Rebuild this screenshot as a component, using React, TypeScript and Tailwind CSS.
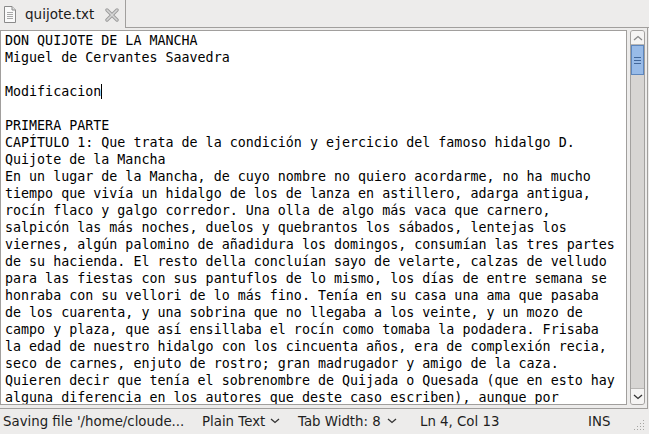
import React from 'react';

const lines = [
  'DON QUIJOTE DE LA MANCHA',
  'Miguel de Cervantes Saavedra',
  '',
  'Modificacion',
  '',
  'PRIMERA PARTE',
  'CAPÍTULO 1: Que trata de la condición y ejercicio del famoso hidalgo D.',
  'Quijote de la Mancha',
  'En un lugar de la Mancha, de cuyo nombre no quiero acordarme, no ha mucho',
  'tiempo que vivía un hidalgo de los de lanza en astillero, adarga antigua,',
  'rocín flaco y galgo corredor. Una olla de algo más vaca que carnero,',
  'salpicón las más noches, duelos y quebrantos los sábados, lentejas los',
  'viernes, algún palomino de añadidura los domingos, consumían las tres partes',
  'de su hacienda. El resto della concluían sayo de velarte, calzas de velludo',
  'para las fiestas con sus pantuflos de lo mismo, los días de entre semana se',
  'honraba con su vellori de lo más fino. Tenía en su casa una ama que pasaba',
  'de los cuarenta, y una sobrina que no llegaba a los veinte, y un mozo de',
  'campo y plaza, que así ensillaba el rocín como tomaba la podadera. Frisaba',
  'la edad de nuestro hidalgo con los cincuenta años, era de complexión recia,',
  'seco de carnes, enjuto de rostro; gran madrugador y amigo de la caza.',
  'Quieren decir que tenía el sobrenombre de Quijada o Quesada (que en esto hay',
  'alguna diferencia en los autores que deste caso escriben), aunque por',
];

function FileIcon() {
  return (
    <svg width="14" height="17" viewBox="0 0 14 17">
      <path d="M1.5 0.5 H9 L12.5 4 V16.5 H1.5 Z" fill="#fafafa" stroke="#8a8a8a" />
      <path d="M9 0.5 V4 H12.5" fill="#e0e0e0" stroke="#8a8a8a" />
      <path d="M4 6.5 H10 M4 8.5 H10 M4 10.5 H10 M4 12.5 H10" stroke="#a8a8a8" />
    </svg>
  );
}

function CloseIcon() {
  return (
    <svg width="14" height="14" viewBox="0 0 14 14">
      <path d="M2 2 L12 12 M12 2 L2 12" stroke="#9a9a9a" strokeWidth="3.4" strokeLinecap="round" />
      <path d="M2 2 L12 12 M12 2 L2 12" stroke="#d6d6d6" strokeWidth="1.6" strokeLinecap="round" />
    </svg>
  );
}

function Chevron({ up = false, color = '#333' }: { up?: boolean; color?: string }) {
  return (
    <svg width="10" height="6" viewBox="0 0 10 6" className="shrink-0">
      <path d={up ? 'M1 5 L5 1.5 L9 5' : 'M1 1 L5 4.5 L9 1'} fill="none" stroke={color} strokeWidth="1.3" />
    </svg>
  );
}

function Grip() {
  const dots: [number, number][] = [];
  for (let r = 0; r < 4; r++) {
    for (let c = 3 - r; c < 4; c++) dots.push([c * 3, r * 3]);
  }
  return (
    <svg width="12" height="12" viewBox="0 0 12 12">
      {dots.map(([x, y], i) => (
        <rect key={i} x={x} y={y} width="1" height="1" fill="#a5a4a2" />
      ))}
    </svg>
  );
}

export default function App() {
  return (
    <div
      className="w-[649px] h-[434px] overflow-hidden bg-[#edeceb] flex flex-col text-[#2e2e2e]"
      style={{ fontFamily: '"DejaVu Sans", sans-serif' }}
    >
      {/* Tabs */}
      <div className="flex h-[28px] shrink-0">
        <div className="w-[126px] h-full border-r border-[#a19f9d] flex items-center pl-[3px] gap-[8px]">
          <FileIcon />
          <span className="text-[13.5px] text-[#1a1a1a] whitespace-nowrap">quijote.txt</span>
          <span className="ml-[3px] mt-[1px] flex"><CloseIcon /></span>
        </div>
        <div className="flex-1 border-b border-[#a19f9d]" />
        <div className="w-[2px] border-b border-[#a19f9d]" />
      </div>

      {/* Notebook page */}
      <div className="flex h-[381px] shrink-0 pt-[2px] border-r border-b border-[#a19f9d] mr-[1px]">
        <div className="w-[627px] h-[375px] bg-white border border-[#a19f9d] overflow-hidden pl-[4px] pt-[1px]">
          {lines.map((l, i) => (
            <div
              key={i}
              className="h-[17px] leading-[17px] text-[13.33px] text-black whitespace-pre flex items-center"
              style={{ fontFamily: '"DejaVu Sans Mono", monospace' }}
            >
              {l}
              {i === 3 && <span className="inline-block w-[1px] h-[15px] bg-black" />}
            </div>
          ))}
        </div>
        <div className="ml-[3px] w-[15px] h-[375px] rounded-[3px] border border-[#a3a19f] bg-[#d7d5d3] flex flex-col overflow-hidden">
          <div className="h-[14px] shrink-0 bg-[#f5f4f3] border-b border-[#b8b6b4] flex items-center justify-center">
            <Chevron up color="#8a8a8a" />
          </div>
          <div className="h-[30px] shrink-0 bg-[#98bbe8] border border-[#5d86bd] flex flex-col items-center justify-center gap-[2px]">
            <div className="w-[7px] h-[1px] bg-[#42679a]" />
            <div className="w-[7px] h-[1px] bg-[#42679a]" />
            <div className="w-[7px] h-[1px] bg-[#42679a]" />
          </div>
          <div className="flex-1" />
          <div className="h-[16px] shrink-0 bg-[#f5f4f3] border-t border-[#b8b6b4] flex items-center justify-center">
            <Chevron color="#333" />
          </div>
        </div>
      </div>

      {/* Status bar */}
      <div className="flex-1 flex items-center text-[13.33px] text-[#1e1e1e] relative whitespace-nowrap">
        <div className="ml-[3px] w-[199px] shrink-0">Saving file '/home/cloude...</div>
        <div className="w-[96px] shrink-0 flex items-center">
          <span>Plain Text</span>
          <span className="ml-[5px] flex"><Chevron /></span>
        </div>
        <div className="w-[122px] shrink-0 flex items-center">
          <span>Tab Width: 8</span>
          <span className="ml-[6px] flex"><Chevron /></span>
        </div>
        <div className="w-[168px] shrink-0">Ln 4, Col 13</div>
        <div className="shrink-0">INS</div>
        <span className="absolute right-[3px] bottom-[2px] flex"><Grip /></span>
      </div>
    </div>
  );
}
